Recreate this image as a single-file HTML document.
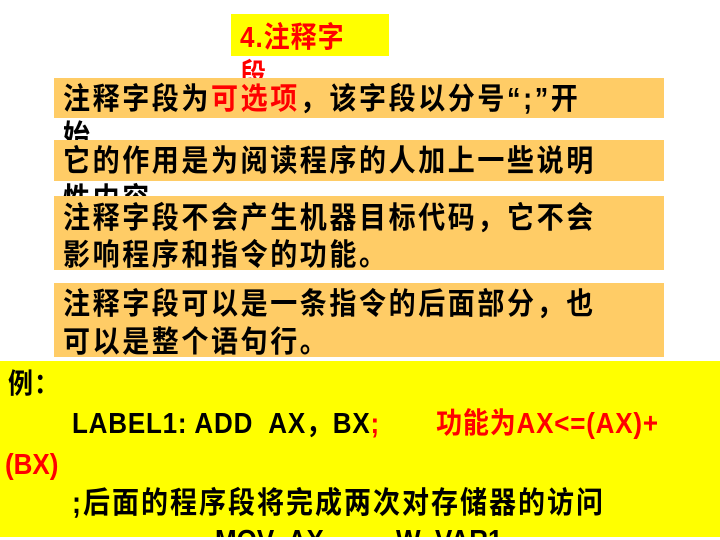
<!DOCTYPE html>
<html><head><meta charset="utf-8"><style>
body{margin:0;width:720px;height:540px;overflow:hidden;background:#fff;position:relative;font-family:"Liberation Sans","Noto Sans CJK SC",sans-serif;font-weight:bold}
.a{position:absolute;white-space:nowrap}
.box{position:absolute;background:#FFCC66;left:54px;width:610px}
.t{position:absolute;white-space:nowrap;font-size:27px;letter-spacing:2.6px;color:#000;line-height:32px;transform:scaleY(1.12);transform-origin:left center}
.r{color:#f00}
</style></head><body>
<div class="a" style="left:231px;top:14px;width:158px;height:42px;background:#ff0"></div>
<div class="t r" style="left:240px;top:21px;letter-spacing:1px;font-size:26px">4.注释字</div>
<div class="t r" style="left:240px;top:58px;font-size:26px">段</div>

<div class="box" style="top:78px;height:40px"></div>
<div class="t" style="left:63px;top:83px">注释字段为<span class="r">可选项</span>，该字段以分号“;”开</div>
<div class="t" style="left:63px;top:120px">始</div>

<div class="box" style="top:140px;height:41px"></div>
<div class="t" style="left:63px;top:145px">它的作用是为阅读程序的人加上一些说明</div>
<div class="t" style="left:63px;top:183px">性内容</div>

<div class="box" style="top:196px;height:74px"></div>
<div class="t" style="left:63px;top:202px">注释字段不会产生机器目标代码，它不会</div>
<div class="t" style="left:63px;top:239px">影响程序和指令的功能。</div>

<div class="box" style="top:283px;height:74px"></div>
<div class="t" style="left:63px;top:288px">注释字段可以是一条指令的后面部分，也</div>
<div class="t" style="left:63px;top:326px">可以是整个语句行。</div>

<div class="a" style="left:0;top:361px;width:720px;height:176px;background:#ff0;overflow:hidden">
<div class="t" style="left:8px;top:7px;font-size:25px;letter-spacing:1px">例：</div>
<div class="t" style="left:72px;top:46px;font-size:26px;letter-spacing:0.8px">LABEL1: ADD&nbsp; AX，BX<span class="r">;&nbsp;&nbsp;&nbsp;&nbsp;&nbsp;&nbsp; 功能为AX&lt;=(AX)+</span></div>
<div class="t r" style="left:5px;top:87px;font-size:26px;letter-spacing:0">(BX)</div>
<div class="t" style="left:72px;top:126px;font-size:27px;letter-spacing:2px">;后面的程序段将完成两次对存储器的访问</div>
<div class="t" style="left:215px;top:163px;font-size:26px;letter-spacing:0">MOV&nbsp; AX,&nbsp;&nbsp;&nbsp;&nbsp;&nbsp;&nbsp;&nbsp;&nbsp; W&nbsp; VAR1</div>
</div>
</body></html>
